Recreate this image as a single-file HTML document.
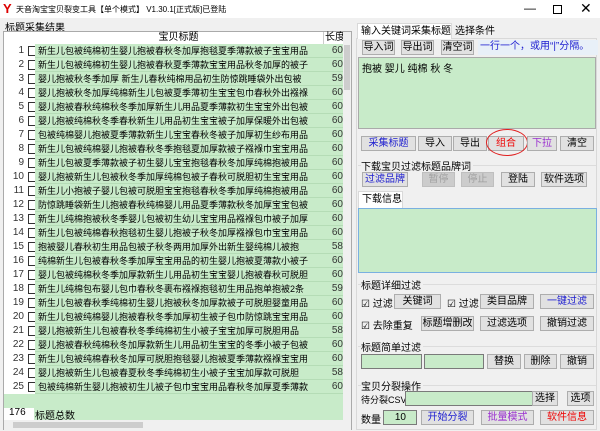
<!DOCTYPE html><html><head><meta charset="utf-8"><style>
*{box-sizing:border-box;margin:0;padding:0}
body{width:600px;height:431px;overflow:hidden;background:#f0f0f0;font:10px "Liberation Sans","Noto Sans CJK SC",sans-serif;color:#000;position:relative}
.a{position:absolute;white-space:nowrap}
.btn{position:absolute;height:15px;background:#e1e1e1;border:1px solid #adadad;text-align:center;line-height:13px;font-size:10px;white-space:nowrap}
.dis{color:#a0a0a0;background:#ccc;border-color:#bfbfbf}
.row{position:absolute;left:4px;width:339px;height:14px;line-height:14px;font-size:9px}
.row .n{position:absolute;left:0;width:20px;text-align:right;color:#333;font-size:10px}
.row .c{position:absolute;left:24px;top:2px;width:10px;height:10px;border:1px solid #333;background:#fff}
.row .t{position:absolute;left:31px;width:290px;height:14px;background:#c8ebc9;padding-left:3px;border-bottom:1px solid #b5dcb6;overflow:hidden}
.row .l{position:absolute;left:321px;width:18px;height:14px;background:#c8ebc9;text-align:right;color:#333;border-bottom:1px solid #b5dcb6;font-size:10px}
.inp{position:absolute;background:#c8ebc9;border:1px solid #7a7a7a}
.grp{position:absolute;border-top:1px solid #dcdcdc}
</style></head><body>
<div class="a" style="left:0;top:0;width:600px;height:18px;background:#fff"></div>
<div class="a" style="left:3px;top:1px;color:#d00;font-size:13px;font-weight:bold">Y</div>
<div class="a" style="left:16px;top:4px;font-size:8px">天音淘宝宝贝裂变工具【单个模式】 V1.30.1[正式版]已登陆</div>
<div class="a" style="left:524px;top:1px;font-size:12px">—</div>
<div class="a" style="left:553px;top:5px;width:9px;height:9px;border:1px solid #000"></div>
<div class="a" style="left:580px;top:0px;font-size:14px">✕</div>
<div class="a" style="left:5px;top:19px;font-size:10px">标题采集结果</div>
<div class="a" style="left:3px;top:31px;width:349px;height:399px;background:#fff;border:1px solid #aaa"></div>
<div class="a" style="left:34px;top:32px;width:290px;height:12px;line-height:12px;text-align:center;font-size:10px;border-right:1px solid #ccc">宝贝标题</div>
<div class="a" style="left:325px;top:32px;font-size:10px;line-height:12px">长度</div>
<div class="a" style="left:343px;top:32px;width:8px;height:389px;background:#f0f0f0"></div>
<div class="a" style="left:344px;top:45px;width:6px;height:45px;background:#cdcdcd"></div>
<div id="rows"></div>
<div class="a" style="left:4px;top:394px;width:339px;height:14px;background:#c8ebc9"></div>
<div class="a" style="left:4px;top:408px;width:339px;height:12px;background:#c8ebc9"></div>
<div class="a" style="left:4px;top:408px;width:30px;height:12px;background:#fff"></div>
<div class="a" style="left:9px;top:407px;font-size:10px">176</div>
<div class="a" style="left:35px;top:407px;font-size:10px">标题总数</div>
<div class="a" style="left:4px;top:420px;width:347px;height:10px;background:#f0f0f0"></div>
<div class="a" style="left:13px;top:422px;width:130px;height:6px;background:#cdcdcd"></div>

<div class="a" style="left:356px;top:38px;width:241px;height:392px;border:1px solid #d9d9d9"></div>
<div class="a" style="left:357px;top:23px;width:95px;height:16px;background:#fff;border:1px solid #d9d9d9;border-bottom:none;padding-left:3px;line-height:15px">输入关键词采集标题</div>
<div class="a" style="left:455px;top:25px;line-height:14px">选择条件</div>
<div class="btn" style="left:362px;top:40px;width:33px">导入词</div>
<div class="btn" style="left:401px;top:40px;width:33px">导出词</div>
<div class="btn" style="left:441px;top:40px;width:33px">清空词</div>
<div class="a" style="left:478px;top:40px;width:120px;height:15px;background:#e8f0f8;color:#2020d0;line-height:14px;padding-left:2px">一行一个，或用“|”分隔。</div>
<div class="inp" style="left:358px;top:57px;width:238px;height:72px;border-color:#aaa"><div style="padding:2px 3px;font-size:10px">抱被 婴儿 纯棉 秋 冬</div></div>
<div class="a" style="left:586px;top:58px;width:9px;height:70px;background:#c8ebc9"></div>
<div class="btn" style="left:361px;top:136px;width:55px;color:#2020d0">采集标题</div>
<div class="btn" style="left:418px;top:136px;width:34px">导入</div>
<div class="btn" style="left:453px;top:136px;width:34px">导出</div>
<div class="btn" style="left:488px;top:136px;width:36px;color:#e00">组合</div>
<div class="a" style="left:486px;top:129px;width:42px;height:27px;border:1.5px solid #e02020;border-radius:50%"></div>
<div class="btn" style="left:527px;top:136px;width:30px;color:#9b30d0">下拉</div>
<div class="btn" style="left:560px;top:136px;width:34px">清空</div>
<div class="grp" style="left:358px;top:165px;width:238px"></div>
<div class="a" style="left:361px;top:158px;background:#f0f0f0;padding-right:2px">下载宝贝过滤标题品牌词</div>
<div class="btn" style="left:362px;top:172px;width:46px;color:#2020d0">过滤品牌</div>
<div class="btn dis" style="left:422px;top:172px;width:33px">暂停</div>
<div class="btn dis" style="left:461px;top:172px;width:33px">停止</div>
<div class="btn" style="left:501px;top:172px;width:34px">登陆</div>
<div class="btn" style="left:541px;top:172px;width:46px">软件选项</div>
<div class="a" style="left:358px;top:191px;width:45px;height:17px;background:#fff;border:1px solid #d9d9d9;border-bottom:none;padding-left:3px;line-height:15px">下载信息</div>
<div class="inp" style="left:358px;top:208px;width:239px;height:65px;border-color:#7ab0e0"></div>
<div class="grp" style="left:358px;top:284px;width:238px"></div>
<div class="a" style="left:361px;top:277px;background:#f0f0f0;padding-right:2px">标题详细过滤</div>
<div class="a" style="left:361px;top:295px">☑ 过滤</div>
<div class="btn" style="left:394px;top:294px;width:47px">关键词</div>
<div class="a" style="left:447px;top:295px">☑ 过滤</div>
<div class="btn" style="left:480px;top:294px;width:54px">类目品牌</div>
<div class="btn" style="left:540px;top:294px;width:54px;color:#2020d0">一键过滤</div>
<div class="a" style="left:361px;top:317px">☑ 去除重复</div>
<div class="btn" style="left:421px;top:316px;width:53px">标题增删改</div>
<div class="btn" style="left:480px;top:316px;width:54px">过滤选项</div>
<div class="btn" style="left:540px;top:316px;width:54px">撤销过滤</div>
<div class="grp" style="left:358px;top:346px;width:238px"></div>
<div class="a" style="left:361px;top:339px;background:#f0f0f0;padding-right:2px">标题简单过滤</div>
<div class="inp" style="left:361px;top:354px;width:61px;height:15px"></div>
<div class="inp" style="left:424px;top:354px;width:60px;height:15px"></div>
<div class="btn" style="left:487px;top:354px;width:34px">替换</div>
<div class="btn" style="left:524px;top:354px;width:33px">删除</div>
<div class="btn" style="left:560px;top:354px;width:34px">撤销</div>
<div class="grp" style="left:358px;top:385px;width:238px"></div>
<div class="a" style="left:361px;top:378px;background:#f0f0f0;padding-right:2px">宝贝分裂操作</div>
<div class="a" style="left:361px;top:393px;font-size:9px">待分裂CSV</div>
<div class="inp" style="left:405px;top:391px;width:152px;height:15px"></div>
<div class="btn" style="left:532px;top:391px;width:26px">选择</div>
<div class="btn" style="left:567px;top:391px;width:27px">选项</div>
<div class="a" style="left:361px;top:411px">数量</div>
<div class="inp" style="left:383px;top:410px;width:34px;height:15px;text-align:right;padding-right:10px;line-height:13px">10</div>
<div class="btn" style="left:421px;top:410px;width:53px;color:#2020d0">开始分裂</div>
<div class="btn" style="left:481px;top:410px;width:53px;color:#9b30d0">批量模式</div>
<div class="btn" style="left:540px;top:410px;width:54px;color:#e00">软件信息</div>
<script>
var T=[["新生儿包被纯棉初生婴儿抱被春秋冬加厚抱毯夏季薄款被子宝宝用品",60],["新生儿包被纯棉初生婴儿抱被春秋夏季薄款宝宝用品秋冬加厚的被子",60],["婴儿抱被秋冬季加厚 新生儿春秋纯棉用品初生防惊跳睡袋外出包被",59],["婴儿抱被秋冬加厚纯棉新生儿包被夏季薄初生宝宝包巾春秋外出襁褓",60],["婴儿抱被春秋纯棉秋冬季加厚新生儿用品夏季薄款初生宝宝外出包被",60],["婴儿抱被纯棉秋冬季春秋新生儿用品初生宝宝被子加厚保暖外出包被",60],["包被纯棉婴儿抱被夏季薄款新生儿宝宝春秋冬被子加厚初生纱布用品",60],["新生儿包被纯棉婴儿抱被春秋冬季抱毯夏加厚款被子襁褓巾宝宝用品",60],["新生儿包被夏季薄款被子初生婴儿宝宝抱毯春秋冬加厚纯棉抱被用品",60],["婴儿抱被新生儿包被秋冬季加厚纯棉包被子春秋可脱胆初生宝宝用品",60],["新生儿小抱被子婴儿包被可脱胆宝宝抱毯春秋冬季加厚纯棉抱被用品",60],["防惊跳睡袋新生儿抱被春秋纯棉婴儿用品夏季薄款秋冬加厚宝宝包被",60],["新生儿纯棉抱被秋冬季婴儿包被初生幼儿宝宝用品襁褓包巾被子加厚",60],["新生儿包被纯棉春秋抱毯初生婴儿抱被子秋冬加厚襁褓包巾宝宝用品",60],["抱被婴儿春秋初生用品包被子秋冬两用加厚外出新生婴纯棉儿被抱",58],["纯棉新生儿包被春秋冬季加厚宝宝用品的初生婴儿抱被夏薄款小被子",60],["婴儿包被纯棉秋冬季加厚款新生儿用品初生宝宝婴儿抱被春秋可脱胆",60],["新生儿纯棉包布婴儿包巾春秋冬裹布襁褓抱毯初生用品抱单抱被2条",59],["新生儿包被春秋季纯棉初生婴儿抱被秋冬加厚款被子可脱胆婴童用品",60],["新生儿包被纯棉婴儿抱被春秋冬季加厚初生被子包巾防惊跳宝宝用品",60],["婴儿抱被新生儿包被春秋冬季纯棉初生小被子宝宝加厚可脱胆用品",58],["婴儿抱被春秋纯棉秋冬加厚款新生儿用品初生宝宝的冬季小被子包被",60],["新生儿包被纯棉春秋冬加厚可脱胆抱毯婴儿抱被夏季薄款襁褓宝宝用",60],["婴儿抱被新生儿包被春夏秋冬季纯棉初生小被子宝宝加厚款可脱胆",58],["包被纯棉新生婴儿抱被初生儿被子包巾宝宝用品春秋冬加厚夏季薄款",60]];
var h="";T.forEach(function(r,i){h+='<div class="row" style="top:'+(44+i*14)+'px"><span class="n">'+(i+1)+'</span><span class="c"></span><span class="t">'+r[0]+'</span><span class="l">'+r[1]+'</span></div>'});
document.getElementById("rows").innerHTML=h;
</script>
</body></html>
